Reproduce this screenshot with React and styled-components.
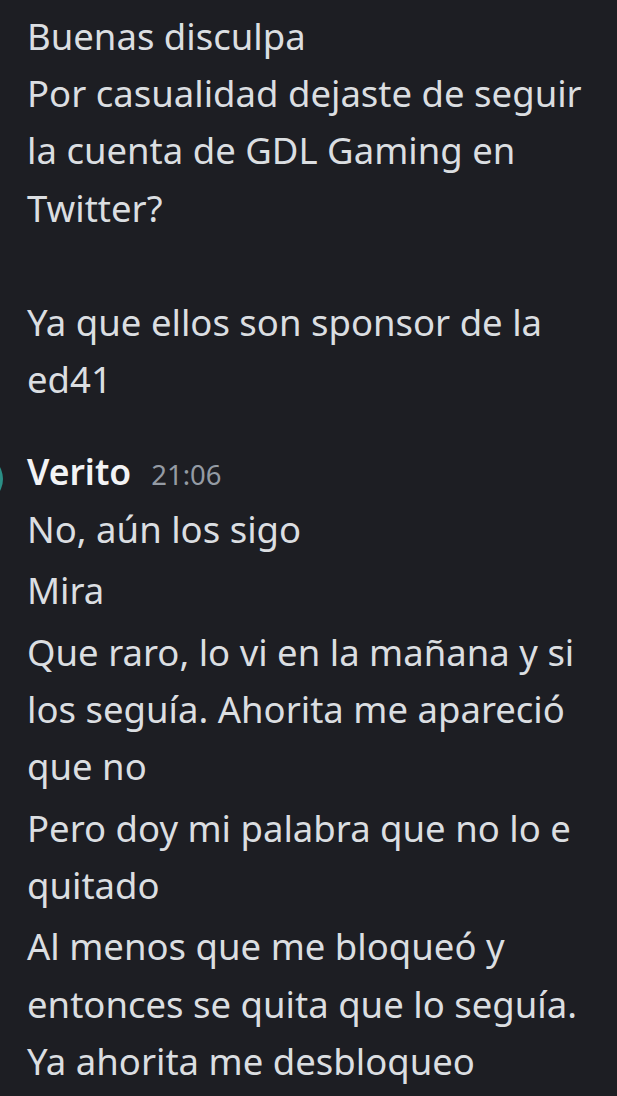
import React from "react";
import styled, { createGlobalStyle } from "styled-components";

const Global = createGlobalStyle`
  html, body { margin: 0; padding: 0; background: #1d1e23; }
  #root { min-height: 100vh; }
`;

const Screen = styled.div`
  width: 617px;
  height: 1096px;
  overflow: hidden;
  background: #1d1e23;
  font-family: "Noto Sans", "Open Sans", sans-serif;
  padding: 8px 0 0 27px;
  box-sizing: border-box;
`;

const Group = styled.div`
  display: flex;
  align-items: flex-start;
  margin-top: ${(p) => p.$top || 0}px;
`;

const Avatar = styled.div`
  width: 50px;
  height: 50px;
  border-radius: 50%;
  background: #2b8f86;
  margin-left: -74px;
  margin-right: 24px;
  margin-top: 8px;
  flex-shrink: 0;
`;

const Body = styled.div`
  display: flex;
  flex-direction: column;
  gap: 4.3px;
`;

const Header = styled.div`
  display: flex;
  align-items: baseline;
  gap: 20px;
  height: 50px;
`;

const Name = styled.span`
  color: #f2f3f5;
  font-size: 35.5px;
  font-weight: 600;
  line-height: 50px;
`;

const Time = styled.span`
  color: #949ba4;
  font-size: 27.5px;
  line-height: 50px;
`;

const Message = styled.div`
  color: #dbdee1;
  font-size: 36.5px;
  line-height: 57.2px;
  white-space: pre;
`;

export default function App() {
  return (
    <>
      <Global />
      <Screen>
        <Body>
          <Message>{"Buenas disculpa\nPor casualidad dejaste de seguir\nla cuenta de GDL Gaming en\nTwitter?\n\nYa que ellos son sponsor de la\ned41"}</Message>
        </Body>
        <Group $top={38}>
          <Avatar />
          <Body>
            <Header>
              <Name>Verito</Name>
              <Time>21:06</Time>
            </Header>
            <Message>No, aún los sigo</Message>
            <Message>Mira</Message>
            <Message>{"Que raro, lo vi en la mañana y si\nlos seguía. Ahorita me apareció\nque no"}</Message>
            <Message>{"Pero doy mi palabra que no lo e\nquitado"}</Message>
            <Message>{"Al menos que me bloqueó y\nentonces se quita que lo seguía.\nYa ahorita me desbloqueo"}</Message>
          </Body>
        </Group>
      </Screen>
    </>
  );
}
